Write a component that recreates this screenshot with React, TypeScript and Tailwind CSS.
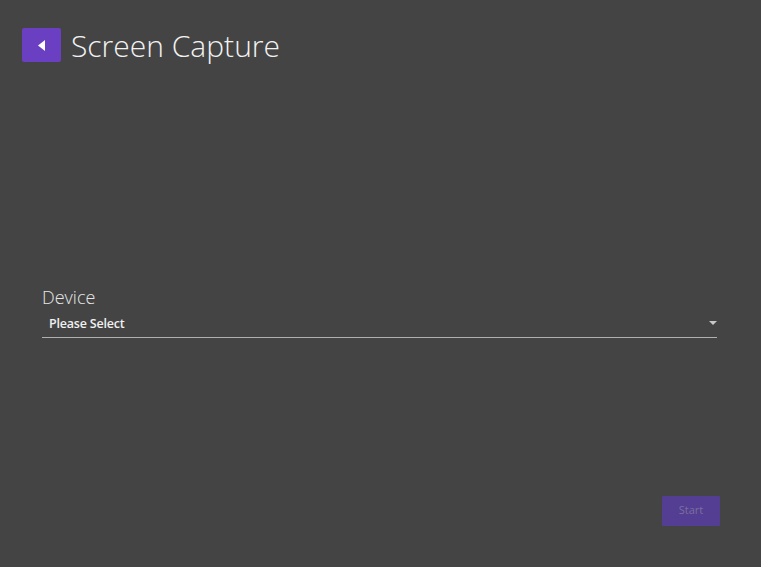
const App = () => {
  return (
    <div className="min-h-screen w-full bg-[#444444] font-['Open_Sans',sans-serif] flex flex-col">
      <div className="flex items-center pl-[22px] pt-[28px]">
        <button className="w-[39px] h-[34px] bg-[#6a3fc2] rounded-[2px] flex items-center justify-center">
          <svg width="8" height="11" viewBox="0 0 8 11">
            <polygon points="7,0 7,11 0,5.5" fill="#ffffff" />
          </svg>
        </button>
        <h1 className="ml-[10px] mt-[2px] text-[30px] font-light text-[#f2f2f2] leading-none">Screen Capture</h1>
      </div>

      <div className="mt-[226px] px-[42px] mr-[2px]">
        <div className="text-[18px] font-light text-[#e6e6e6] leading-none">Device</div>
        <div className="mt-[12px] flex items-center justify-between border-b border-[#b0b0b0] pl-[7px] pb-[6px]">
          <span className="text-[12.5px] font-semibold text-[#f0f0f0] leading-none tracking-[-0.2px]">Please Select</span>
          <svg width="8" height="4" viewBox="0 0 8 4" className="mb-[3px]">
            <polygon points="0,0 8,0 4,4" fill="#c8c8c8" />
          </svg>
        </div>
      </div>

      <div className="mt-[158px] flex justify-end pr-[41px]">
        <button className="w-[58px] h-[30px] bg-[#533e93] rounded-[1px] text-[11px] text-[#7a6f9e]">Start</button>
      </div>
    </div>
  );
};

export default App;
